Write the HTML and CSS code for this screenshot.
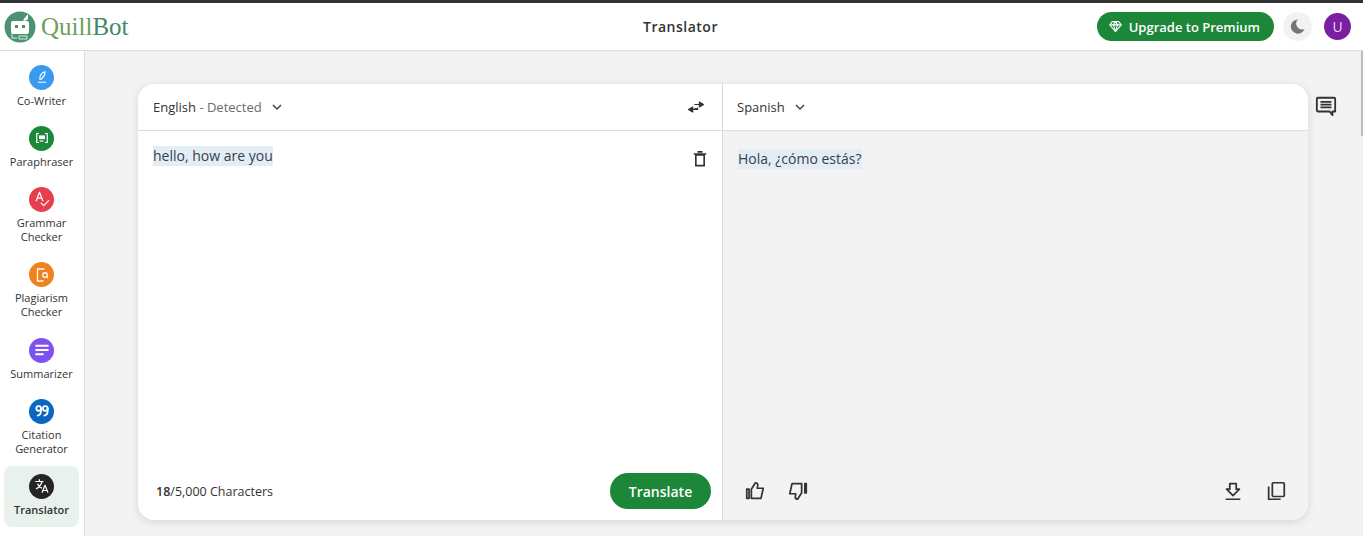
FILE: index.html
```html
<!DOCTYPE html>
<html lang="en">
<head>
    <meta charset="UTF-8">
    <title>QuillBot Translator</title>
    <link rel="stylesheet" href="styles.css">
</head>
<body>
    <header class="topbar">
        <div class="brand">
            <svg class="brand-icon" viewBox="0 0 32 32" width="32" height="32">
                <circle cx="16" cy="16" r="15.5" fill="#4a9270"/>
                <path d="M19 9 L24 3 L24 8 L21 10 Z" fill="#fff"/>
                <rect x="7" y="10" width="18" height="13" rx="2" fill="#fff"/>
                <rect x="11" y="14" width="3" height="3" fill="#4a9270"/>
                <rect x="18" y="14" width="3" height="3" fill="#4a9270"/>
                <path d="M8 23 v4 h5 M15 25 h8 v3 h-8 z" fill="none" stroke="#dfe9e3" stroke-width="1"/>
            </svg>
            <span class="brand-name">Quill<span class="brand-bot">Bot</span></span>
        </div>
        <div class="page-title">Translator</div>
        <div class="top-actions">
            <button class="upgrade">
                <svg viewBox="0 0 16 16" width="13" height="13" fill="none" stroke="#fff" stroke-width="1.3" stroke-linejoin="round">
                    <path d="M4 2h8l3 4-7 8.500L1 6z"/>
                    <path d="M1 6h14M5.500 6 8 14 10.500 6 8 2 5.500 6"/>
                </svg>
                Upgrade to Premium
            </button>
            <div class="theme-btn">
                <svg viewBox="0 0 24 24" width="19" height="19"><path d="M12.500 3a9 9 0 1 0 8.500 12 7.500 7.500 0 0 1-8.500-12z" fill="#757575"/></svg>
            </div>
            <div class="avatar">U</div>
        </div>
    </header>

    <div class="page">
        <nav class="sidebar">
            <div class="nav-item">
                <div class="nav-icon blue">
                    <svg viewBox="0 0 24 24" width="18" height="18" fill="none" stroke="#fff" stroke-width="1.500" stroke-linecap="round"><path d="M9 15c0-5 3-9 7-10 0 4-1 6-3 7 0 2-2 3-4 3zM7 19h10"/></svg>
                </div>
                <div class="nav-label">Co-Writer</div>
            </div>
            <div class="nav-item">
                <div class="nav-icon green">
                    <svg viewBox="0 0 24 24" width="18" height="18" fill="none" stroke="#fff" stroke-width="1.600"><path d="M8 6H5v12h3M16 6h3v12h-3"/><rect x="8" y="8.500" width="8" height="5" fill="#fff" stroke="none"/><path d="M9 16h5"/></svg>
                </div>
                <div class="nav-label">Paraphraser</div>
            </div>
            <div class="nav-item">
                <div class="nav-icon red">
                    <svg viewBox="0 0 24 24" width="20" height="20" fill="none" stroke="#fff" stroke-width="1.500" stroke-linecap="round" stroke-linejoin="round"><path d="M5 14 9 4l4 10M6.500 11h5M11 17l3 3 6-6"/></svg>
                </div>
                <div class="nav-label">Grammar Checker</div>
            </div>
            <div class="nav-item">
                <div class="nav-icon orange">
                    <svg viewBox="0 0 24 24" width="18" height="18" fill="none" stroke="#fff" stroke-width="1.700"><path d="M14 5V4H6v16h8"/><path d="M14 4h1"/><circle cx="16" cy="12" r="3"/><path d="m18 14 2 2"/></svg>
                </div>
                <div class="nav-label">Plagiarism Checker</div>
            </div>
            <div class="nav-item">
                <div class="nav-icon purple">
                    <svg viewBox="0 0 24 24" width="20" height="20" fill="none" stroke="#fff" stroke-width="2.400" stroke-linecap="round"><path d="M5 7h14M5 12h14M5 17h8"/></svg>
                </div>
                <div class="nav-label">Summarizer</div>
            </div>
            <div class="nav-item">
                <div class="nav-icon navy">
                    <svg viewBox="0 0 24 24" width="20" height="20" fill="none" stroke="#fff" stroke-width="2.200" stroke-linecap="round"><circle cx="8" cy="9" r="2.800"/><path d="M10.800 9v3c0 3-1.500 5-4 5.500"/><circle cx="16" cy="9" r="2.800"/><path d="M18.800 9v3c0 3-1.500 5-4 5.500"/></svg>
                </div>
                <div class="nav-label">Citation Generator</div>
            </div>
            <div class="nav-item active">
                <div class="nav-icon dark">
                    <svg viewBox="0 0 24 24" width="18" height="18" fill="none" stroke="#fff" stroke-width="1.600" stroke-linejoin="round"><path d="M3 6h11M8.500 3v3M12 6c-1 4-4 8-8 10M6 9c1 3 4 5 6 6M12 21l4-10 4 10M13.500 18h5"/></svg>
                </div>
                <div class="nav-label">Translator</div>
            </div>
        </nav>

        <main class="content">
            <section class="card">
                <div class="panel left">
                    <div class="panel-head">
                        <div class="lang"><span class="lang-name">English</span><span class="detected"> - Detected</span>
                            <svg class="chev" viewBox="0 0 12 12" width="12" height="12"><path d="M2 4l4 4 4-4" fill="none" stroke="#444" stroke-width="1.500"/></svg>
                        </div>
                        <svg class="swap" viewBox="0 0 24 24" width="20" height="20"><path d="M3 15h11v-2l0 0M9 18l-4-3M3 15l5 0M8 12v6L3 15zM21 9H10M16 6v6l5-3z" fill="#333" stroke="#333" stroke-width="1.300" stroke-linejoin="round"/></svg>
                    </div>
                    <div class="panel-body">
                        <div class="text-row">
                            <span class="source-text">hello, how are you</span>
                            <svg class="trash" viewBox="0 0 24 24" width="20" height="20" fill="none" stroke="#333" stroke-width="2"><path d="M7 7h10v13H7zM4.500 6h15M9 3.500h6"/></svg>
                        </div>
                        <div class="panel-foot">
                            <div class="counter"><b>18</b>/5,000 Characters</div>
                            <button class="translate">Translate</button>
                        </div>
                    </div>
                </div>
                <div class="panel right">
                    <div class="panel-head">
                        <div class="lang"><span class="lang-name">Spanish</span>
                            <svg class="chev" viewBox="0 0 12 12" width="12" height="12"><path d="M2 4l4 4 4-4" fill="none" stroke="#444" stroke-width="1.500"/></svg>
                        </div>
                    </div>
                    <div class="panel-body shaded">
                        <div class="text-row target"><span class="source-text">Hola, ¿cómo estás?</span></div>
                        <div class="panel-foot">
                            <div class="icon-group">
                                <svg viewBox="0 0 24 24" width="22" height="22" fill="none" stroke="#333" stroke-width="1.900" stroke-linejoin="round"><path d="M3 10v10h2.500V10zM8 10l4.500-7c1.500 0 2.500 1 2.500 2.500L14.500 9H21l-2.500 11H8z"/></svg>
                                <svg viewBox="0 0 24 24" width="22" height="22" fill="none" stroke="#333" stroke-width="1.900" stroke-linejoin="round"><path d="M21 14V4h-1.500v10zM16 14l-4.500 7C10 21 9 20 9 18.500L9.500 15H3L5.500 4H16z"/></svg>
                            </div>
                            <div class="icon-group">
                                <svg viewBox="0 0 24 24" width="22" height="22" fill="none" stroke="#333" stroke-width="1.900" stroke-linejoin="round"><path d="M8.500 4h7v6H19l-7 7-7-7h3.500zM4 21h16"/></svg>
                                <svg viewBox="0 0 24 24" width="22" height="22" fill="none" stroke="#333" stroke-width="1.900"><rect x="8" y="3" width="13" height="15" rx="1"/><path d="M4 7v14h13"/></svg>
                            </div>
                        </div>
                    </div>
                </div>
            </section>
            <aside class="side-tool">
                <svg viewBox="0 0 24 24" width="22" height="22"><path d="M3 3h18a1 1 0 0 1 1 1v14h-3v4l-3-4H3a1 1 0 0 1-1-1V4a1 1 0 0 1 1-1z" fill="none" stroke="#333" stroke-width="2" stroke-linejoin="round"/><path d="M6 7.500h12M6 10.500h12M6 13.500h12" stroke="#333" stroke-width="1.800"/></svg>
            </aside>
        </main>
        <div class="scrollbar"><div class="scroll-thumb"></div></div>
    </div>
</body>
</html>
```

FILE: styles.css
```css
* {
    box-sizing: border-box;
}

html, body {
    height: 100%;
}

body {
    margin: 0;
    font-family: "Open Sans", "Liberation Sans", sans-serif;
    color: #333;
    background-color: #f3f3f3;
    display: flex;
    flex-direction: column;
    overflow: hidden;
}

button {
    font-family: inherit;
    border: none;
    cursor: pointer;
}

/* Top bar */
.topbar {
    height: 51px;
    flex: none;
    display: flex;
    align-items: center;
    justify-content: space-between;
    position: relative;
    background-color: #fff;
    border-top: 3px solid #333;
    border-bottom: 1px solid #dcdcdc;
    padding: 0 12px 0 4px;
}

.brand {
    display: flex;
    align-items: center;
    gap: 5px;
}

.brand-name {
    font-family: "Liberation Serif", serif;
    font-size: 25px;
    color: #6b9f5a;
}

.brand-bot {
    color: #3f8a68;
}

.page-title {
    position: absolute;
    left: 643px;
    top: 14px;
    font-size: 14px;
    font-weight: 600;
    letter-spacing: 0.5px;
}

.top-actions {
    display: flex;
    align-items: center;
}

.upgrade {
    display: flex;
    align-items: center;
    gap: 7px;
    height: 29px;
    padding: 0 14px 0 12px;
    border-radius: 15px;
    background-color: #1d8739;
    color: #fff;
    font-size: 13px;
    font-weight: 600;
}

.theme-btn {
    width: 29px;
    height: 29px;
    margin-left: 9px;
    border-radius: 50%;
    background-color: #f2f2f2;
    display: flex;
    align-items: center;
    justify-content: center;
}

.avatar {
    width: 27px;
    height: 27px;
    margin-left: 12px;
    border-radius: 50%;
    background-color: #7b1fa2;
    color: #e8d5f0;
    font-size: 14px;
    display: flex;
    align-items: center;
    justify-content: center;
}

/* Page */
.page {
    flex: 1;
    display: flex;
    min-height: 0;
}

.sidebar {
    width: 85px;
    flex: none;
    background-color: #fff;
    border-right: 1px solid #dcdcdc;
    padding: 6px 5px 0 4px;
}

.nav-item {
    padding: 7.7px 6px 10px;
    display: flex;
    flex-direction: column;
    align-items: center;
    border-radius: 8px;
}

.nav-item.active {
    background-color: #e8f1ec;
}

.nav-item.active .nav-label {
    font-weight: 600;
}

.nav-icon {
    width: 25px;
    height: 25px;
    border-radius: 50%;
    display: flex;
    align-items: center;
    justify-content: center;
}

.blue { background-color: #3a9af0; }
.green { background-color: #1d8739; }
.red { background-color: #e83f4e; }
.orange { background-color: #f0821e; }
.purple { background-color: #7d52ee; }
.navy { background-color: #0b66c0; }
.dark { background-color: #252525; }

.nav-label {
    margin-top: 4px;
    font-size: 11px;
    line-height: 14.35px;
    text-align: center;
    color: #333;
}

.content {
    flex: 1;
    display: flex;
    align-items: flex-start;
    padding: 33px 0 0 53px;
    min-width: 0;
}

/* Translator card */
.card {
    width: 1170px;
    height: 436px;
    flex: none;
    display: flex;
    border-radius: 16px;
    background-color: #fff;
    box-shadow: 0 2px 10px rgba(0, 0, 0, 0.12);
    overflow: hidden;
}

.panel {
    display: flex;
    flex-direction: column;
}

.panel.left {
    width: 585px;
    border-right: 1px solid #d8d8d8;
}

.panel.right {
    flex: 1;
}

.panel-head {
    height: 47px;
    flex: none;
    display: flex;
    align-items: center;
    justify-content: space-between;
    padding: 0 16px 0 15px;
    border-bottom: 1px solid #dcdcdc;
    font-size: 13px;
}

.panel.right .panel-head {
    padding-left: 14px;
}

.lang {
    display: flex;
    align-items: center;
    white-space: pre;
}

.detected {
    color: #6b6b6b;
}

.chev {
    margin-left: 9px;
}

.panel-body {
    flex: 1;
    display: flex;
    flex-direction: column;
    justify-content: space-between;
}

.shaded {
    background-color: #f3f3f3;
}

.text-row {
    display: flex;
    align-items: flex-start;
    justify-content: space-between;
    padding: 15px 12px 0 15px;
    font-size: 14px;
    line-height: 20px;
}

.text-row.target {
    padding-top: 18px;
}

.source-text {
    background-color: #e3edf6;
    color: #37404a;
}

.trash {
    margin-top: 3px;
}

.panel-foot {
    display: flex;
    align-items: center;
    justify-content: space-between;
    padding: 0 11px 11px 18px;
}

.counter {
    font-size: 12.500px;
}

.counter b {
    font-weight: 600;
}

.translate {
    height: 36px;
    width: 101px;
    border-radius: 18px;
    background-color: #1d8739;
    color: #fff;
    font-size: 14px;
    font-weight: 600;
}

.icon-group {
    display: flex;
    gap: 21px;
    padding: 7px 10px 7px 3px;
}

.side-tool {
    padding: 11px 0 0 7px;
}

.scrollbar {
    width: 2px;
    flex: none;
    background-color: #f1f1f1;
}

.scroll-thumb {
    height: 85px;
    background-color: #bdbdbd;
}
```
